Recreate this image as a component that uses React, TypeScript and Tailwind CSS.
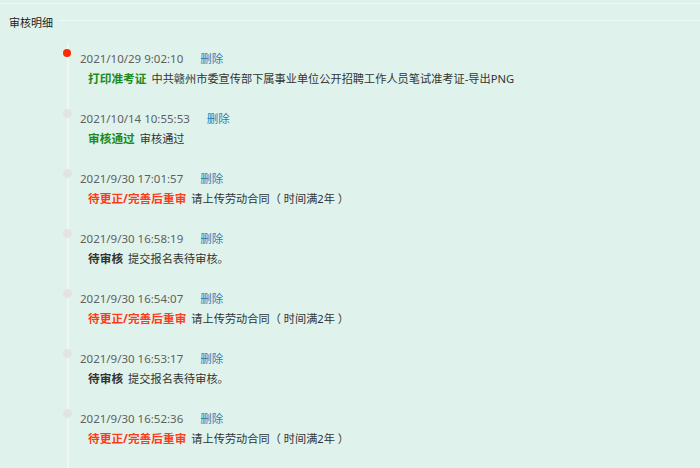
import React from "react";

type Item = {
  date: string;
  label: string;
  color: string;
  desc: string;
  active?: boolean;
};

const items: Item[] = [
  { date: "2021/10/29 9:02:10", label: "打印准考证", color: "text-[#1e8a1e]", desc: "中共赣州市委宣传部下属事业单位公开招聘工作人员笔试准考证-导出PNG", active: true },
  { date: "2021/10/14 10:55:53", label: "审核通过", color: "text-[#1e8a1e]", desc: "审核通过" },
  { date: "2021/9/30 17:01:57", label: "待更正/完善后重审", color: "text-[#ff3a1a]", desc: "请上传劳动合同（ 时间满2年 ）" },
  { date: "2021/9/30 16:58:19", label: "待审核", color: "text-[#333333]", desc: "提交报名表待审核。" },
  { date: "2021/9/30 16:54:07", label: "待更正/完善后重审", color: "text-[#ff3a1a]", desc: "请上传劳动合同（ 时间满2年 ）" },
  { date: "2021/9/30 16:53:17", label: "待审核", color: "text-[#333333]", desc: "提交报名表待审核。" },
  { date: "2021/9/30 16:52:36", label: "待更正/完善后重审", color: "text-[#ff3a1a]", desc: "请上传劳动合同（ 时间满2年 ）" },
];

export default function App() {
  return (
    <div
      className="w-[700px] h-[468px] overflow-hidden bg-[#dff3ec] pt-[3px]"
      style={{ fontFamily: '"Noto Sans", "Noto Sans CJK SC", sans-serif' }}
    >
      <div className="h-px bg-[#eefaf6]" />
      <div className="flex items-start mt-[12px]">
        <span className="pl-[9px] text-[11px] leading-[14px] text-[#222]">审核明细</span>
        <div className="flex-1 h-px bg-[#eefaf6] mt-[4px] ml-[5px]" />
      </div>
      <div className="ml-[67px] mt-[13px] pt-[6px] border-l-2 border-[#f1f6f4] h-[500px]">
        {items.map((it, i) => (
          <div key={i} className="relative h-[60px] pl-[11px]">
            <span
              className={
                it.active
                  ? "absolute left-[-6px] top-0 w-[8px] h-[8px] rounded-full bg-[#ff2a00]"
                  : "absolute left-[-6px] top-0 w-[9px] h-[9px] rounded-full bg-[#e3e3e3]"
              }
            />
            <div className="flex items-center h-[20px] text-[11.5px] text-[#5f5f5f]">
              <span>{it.date}</span>
              <span className="ml-[17px] text-[#2b7bb3]">删除</span>
            </div>
            <div className="flex items-center h-[20px] pl-[8px]">
              <span className={`text-[11.7px] font-bold ${it.color}`}>{it.label}</span>
              <span className="ml-[5px] text-[11.2px] text-[#333]">{it.desc}</span>
            </div>
          </div>
        ))}
      </div>
    </div>
  );
}
